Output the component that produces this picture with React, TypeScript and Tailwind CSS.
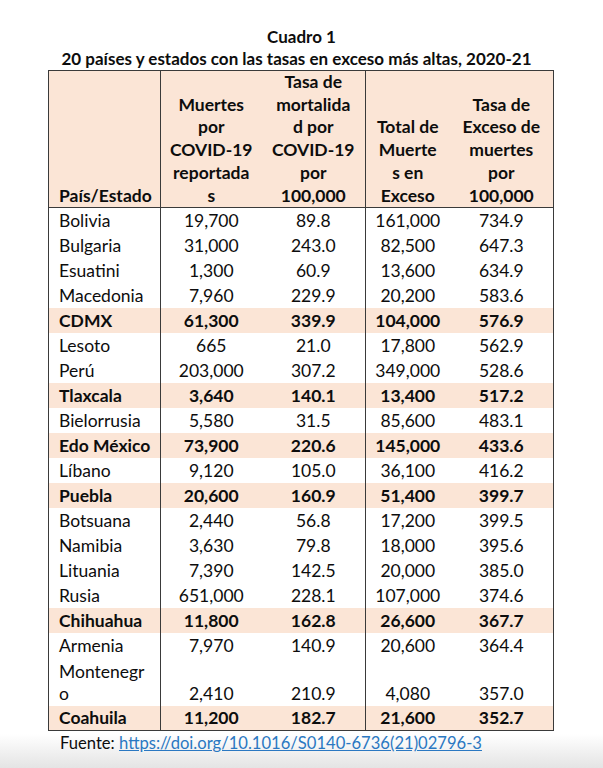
import React from 'react';

type Row = {
  name: string[];
  muertes: string;
  tasa: string;
  exceso: string;
  tasaExceso: string;
  hl?: boolean;
};

const rows: Row[] = [
  { name: ['Bolivia'], muertes: '19,700', tasa: '89.8', exceso: '161,000', tasaExceso: '734.9' },
  { name: ['Bulgaria'], muertes: '31,000', tasa: '243.0', exceso: '82,500', tasaExceso: '647.3' },
  { name: ['Esuatini'], muertes: '1,300', tasa: '60.9', exceso: '13,600', tasaExceso: '634.9' },
  { name: ['Macedonia'], muertes: '7,960', tasa: '229.9', exceso: '20,200', tasaExceso: '583.6' },
  { name: ['CDMX'], muertes: '61,300', tasa: '339.9', exceso: '104,000', tasaExceso: '576.9', hl: true },
  { name: ['Lesoto'], muertes: '665', tasa: '21.0', exceso: '17,800', tasaExceso: '562.9' },
  { name: ['Perú'], muertes: '203,000', tasa: '307.2', exceso: '349,000', tasaExceso: '528.6' },
  { name: ['Tlaxcala'], muertes: '3,640', tasa: '140.1', exceso: '13,400', tasaExceso: '517.2', hl: true },
  { name: ['Bielorrusia'], muertes: '5,580', tasa: '31.5', exceso: '85,600', tasaExceso: '483.1' },
  { name: ['Edo México'], muertes: '73,900', tasa: '220.6', exceso: '145,000', tasaExceso: '433.6', hl: true },
  { name: ['Líbano'], muertes: '9,120', tasa: '105.0', exceso: '36,100', tasaExceso: '416.2' },
  { name: ['Puebla'], muertes: '20,600', tasa: '160.9', exceso: '51,400', tasaExceso: '399.7', hl: true },
  { name: ['Botsuana'], muertes: '2,440', tasa: '56.8', exceso: '17,200', tasaExceso: '399.5' },
  { name: ['Namibia'], muertes: '3,630', tasa: '79.8', exceso: '18,000', tasaExceso: '395.6' },
  { name: ['Lituania'], muertes: '7,390', tasa: '142.5', exceso: '20,000', tasaExceso: '385.0' },
  { name: ['Rusia'], muertes: '651,000', tasa: '228.1', exceso: '107,000', tasaExceso: '374.6' },
  { name: ['Chihuahua'], muertes: '11,800', tasa: '162.8', exceso: '26,600', tasaExceso: '367.7', hl: true },
  { name: ['Armenia'], muertes: '7,970', tasa: '140.9', exceso: '20,600', tasaExceso: '364.4' },
  { name: ['Montenegr', 'o'], muertes: '2,410', tasa: '210.9', exceso: '4,080', tasaExceso: '357.0' },
  { name: ['Coahuila'], muertes: '11,200', tasa: '182.7', exceso: '21,600', tasaExceso: '352.7', hl: true },
];

const lines = (parts: string[]) =>
  parts.map((p, i) => (
    <React.Fragment key={i}>
      {i > 0 && <br />}
      {p}
    </React.Fragment>
  ));

export default function App() {
  return (
    <div className="w-[603px] h-[768px] bg-white text-[#0d0d0d] font-['Lato',sans-serif] relative overflow-hidden">
      <div className="absolute left-0 right-0 bottom-0 h-[34px] bg-gradient-to-b from-white to-[#e4e4e4]" />
      <div className="relative pt-[26px]">
        <h1 className="text-center font-bold text-[17px] leading-[22px]">Cuadro 1</h1>
        <h2 className="text-center font-bold text-[17px] leading-[22px] ml-[-10px]">
          20 países y estados con las tasas en exceso más altas, 2020-21
        </h2>

        <table className="ml-[48px] border-collapse border border-[#3a3a3a] text-[17.5px] table-fixed w-[505px]">
          <colgroup>
            <col className="w-[112px]" />
            <col className="w-[101px]" />
            <col className="w-[104px]" />
            <col className="w-[84px]" />
            <col className="w-[104px]" />
          </colgroup>
          <thead>
            <tr className="bg-[#fbe5d6] font-bold leading-[22.7px] align-bottom">
              <th className="text-left pl-[10px] font-bold border-r border-b border-[#3a3a3a] h-[137px]">País/Estado</th>
              <th className="text-center font-bold border-b border-[#3a3a3a]">{lines(['Muertes', 'por', 'COVID-19', 'reportada', 's'])}</th>
              <th className="text-center font-bold border-r border-b border-[#3a3a3a]">{lines(['Tasa de', 'mortalida', 'd por', 'COVID-19', 'por', '100,000'])}</th>
              <th className="text-center font-bold border-b border-[#3a3a3a]">{lines(['Total de', 'Muerte', 's en', 'Exceso'])}</th>
              <th className="text-center font-bold border-b border-[#3a3a3a]">{lines(['Tasa de', 'Exceso de', 'muertes', 'por', '100,000'])}</th>
            </tr>
          </thead>
          <tbody>
            {rows.map((r) => (
              <tr
                key={r.name.join('')}
                className={(r.hl ? 'bg-[#fbe5d6] font-bold ' : '') + 'align-bottom leading-[22px]'}
              >
                <td className={'pl-[10px] pb-[1px] border-r border-[#3a3a3a] ' + (r.name.length > 1 ? 'h-[48px]' : 'h-[25px]')}>
                  {lines(r.name)}
                </td>
                <td className="text-center pb-[1px]">{r.muertes}</td>
                <td className="text-center pb-[1px] border-r border-[#3a3a3a]">{r.tasa}</td>
                <td className="text-center pb-[1px]">{r.exceso}</td>
                <td className="text-center pb-[1px]">{r.tasaExceso}</td>
              </tr>
            ))}
          </tbody>
        </table>

        <p className="pl-[60px] text-[16.6px] leading-[22px] mt-[1px]">
          Fuente:{' '}
          <a href="#" className="text-[#2a78c2] underline">
            https://doi.org/10.1016/S0140-6736(21)02796-3
          </a>
        </p>
      </div>
    </div>
  );
}
